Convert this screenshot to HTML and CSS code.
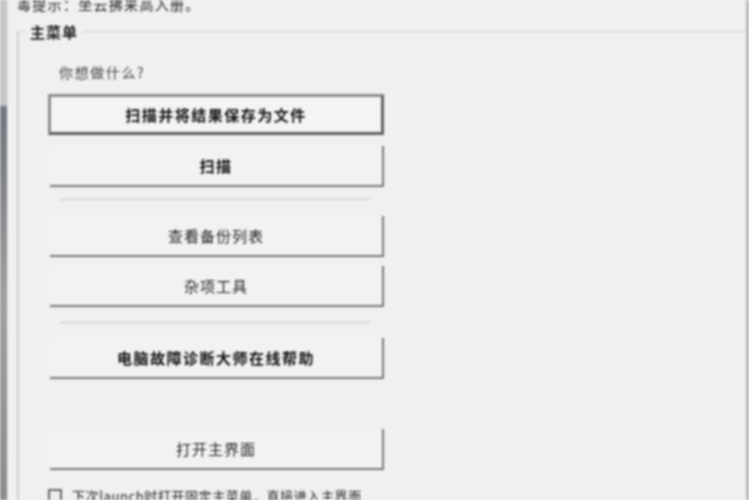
FILE: index.html
```html
<!DOCTYPE html>
<html lang="zh">
<head>
<meta charset="utf-8">
<title>主菜单</title>
<link rel="stylesheet" href="styles.css">
</head>
<body>
<div class="screen">
  <div class="side"></div>
  <div class="main">
    <p class="hint">毒提示：坐云拂来高入册。</p>
    <section class="group">
      <h2 class="legend">主菜单</h2>
      <div class="column">
        <p class="ask">你想做什么?</p>
        <button class="btn default bold">扫描并将结果保存为文件</button>
        <button class="btn bold gap-11">扫描</button>
        <div class="rule rule-a"></div>
        <button class="btn">查看备份列表</button>
        <button class="btn gap-9">杂项工具</button>
        <div class="rule rule-b"></div>
        <button class="btn bold">电脑故障诊断大师在线帮助</button>
        <button class="btn gap-50">打开主界面</button>
        <label class="note"><span class="check"></span>下次launch时打开固定主菜单，直接进入主界面</label>
      </div>
    </section>
  </div>
  <div class="edge"></div>
</div>
</body>
</html>
```
FILE: styles.css
```css
* { box-sizing: border-box; }
html, body { margin: 0; height: 100%; overflow: hidden; background: #f0f0f0; }
.screen {
  display: flex;
  width: 749px;
  height: 500px;
  overflow: hidden;
  background: #f0f0f0;
  font-family: "Noto Sans CJK SC", "Liberation Sans", sans-serif;
  font-size: 15px;
  letter-spacing: 1px;
  color: #222;
  filter: blur(1px);
}
.side {
  flex: 0 0 8px;
  background: linear-gradient(to bottom, #c6c6c6 0, #c6c6c6 104px, #6f7780 108px, #7c7f84 160px, #a0a0a0 300px, #8c8c8c 500px);
  border-right: 1px solid #e2e2e2;
}
.main { flex: 1; min-width: 0; padding: 0 0 0 9px; }
.edge { flex: 0 0 3px; background: #b9b9b9; }
.hint {
  margin: -6px 0 0;
  height: 24px;
  line-height: 20px;
  font-size: 14px;
  letter-spacing: 1.3px;
  color: #222;
}
.group {
  position: relative;
  margin-top: 13px;
  height: 520px;
  border: 1px solid #d2d2d2;
  border-left: 2px solid #cfcfcf;
  border-right: 0;
  padding: 0 0 0 29px;
}
.legend {
  position: absolute;
  left: 7px;
  top: -10px;
  margin: 0;
  padding: 0 4px;
  background: #f0f0f0;
  font-size: 15px;
  line-height: 20px;
  font-weight: 700;
  color: #222;
}
.column { display: flex; flex-direction: column; width: 336px; }
.ask {
  margin: 30px 0 0 11px;
  height: 20px;
  line-height: 20px;
  font-size: 14px;
  letter-spacing: 1.6px;
  color: #444;
}
.btn {
  display: block;
  flex: none;
  align-self: flex-end;
  width: 334px;
  height: 41px;
  padding: 0;
  border: 0;
  border-right: 2px solid #777;
  border-bottom: 2px solid #777;
  background: #f2f2f2;
  font: inherit;
  letter-spacing: 1px;
  color: #222;
}
.bold { font-weight: 700; letter-spacing: 1.5px; color: #111; }
.default {
  width: 336px;
  margin-top: 12px;
  border: 3px solid #8c8c8c;
  border-bottom-color: #606060;
  border-right-color: #606060;
  box-shadow: inset 1px 1px 0 #fafafa;
  background: #f4f4f4;
}
.gap-11 { margin-top: 11px; }
.gap-9 { margin-top: 9px; }
.gap-50 { margin-top: 50px; }
.rule {
  flex: none;
  height: 1px;
  margin-left: 12px;
  width: 310px;
  background: #c6c6c6;
}
.rule-a { margin-top: 12px; margin-bottom: 16px; }
.rule-b { margin-top: 15px; margin-bottom: 15px; }
.note {
  display: flex;
  align-items: center;
  gap: 10px;
  margin-top: 15px;
  height: 20px;
  white-space: nowrap;
  font-size: 13px;
  letter-spacing: 0.6px;
  color: #222;
}
.check {
  flex: none;
  width: 14px;
  height: 13px;
  border: 2px solid #666;
  background: #eee;
}
```
